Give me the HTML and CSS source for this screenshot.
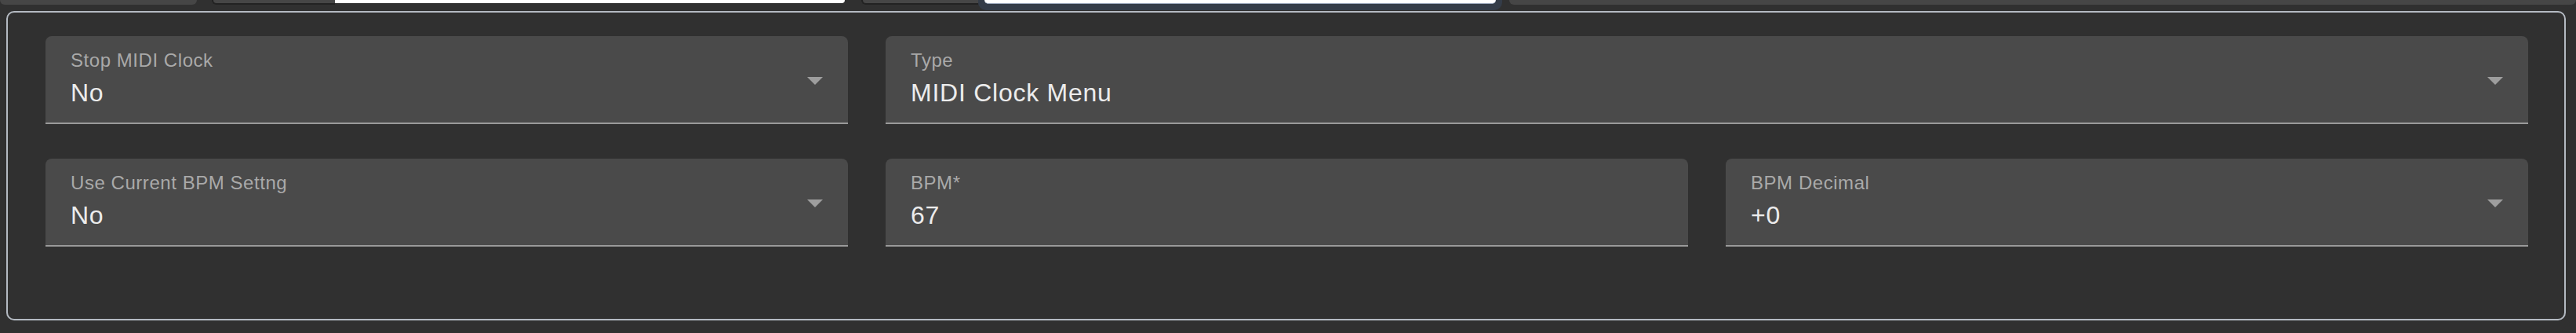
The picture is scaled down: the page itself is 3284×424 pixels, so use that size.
FILE: index.html
```html
<!DOCTYPE html>
<html lang="en">
<head>
<meta charset="utf-8">
<title>MIDI Clock</title>
<link rel="stylesheet" href="styles.css">
</head>
<body>
<div class="topstrip">
  <div class="stub stub-select stub-first"></div>
  <div class="stub-group">
    <div class="stub stub-btn"></div>
    <div class="stub stub-input"></div>
  </div>
  <div class="stub-group stub-group-2">
    <div class="stub stub-btn stub-btn-2"></div>
    <div class="stub-focus"><div class="stub stub-input stub-input-focused"></div></div>
  </div>
  <div class="stub stub-select stub-last"></div>
</div>
<section class="panel">
  <div class="grid">
    <div class="field select">
      <div class="field-text">
        <div class="label">Stop MIDI Clock</div>
        <div class="value">No</div>
      </div>
      <svg class="arrow" width="20" height="10" viewBox="0 0 20 10"><polygon points="0,0 20,0 10,10"/></svg>
    </div>
    <div class="field select span2">
      <div class="field-text">
        <div class="label">Type</div>
        <div class="value">MIDI Clock Menu</div>
      </div>
      <svg class="arrow" width="20" height="10" viewBox="0 0 20 10"><polygon points="0,0 20,0 10,10"/></svg>
    </div>
    <div class="field select">
      <div class="field-text">
        <div class="label">Use Current BPM Settng</div>
        <div class="value">No</div>
      </div>
      <svg class="arrow" width="20" height="10" viewBox="0 0 20 10"><polygon points="0,0 20,0 10,10"/></svg>
    </div>
    <div class="field">
      <div class="field-text">
        <div class="label">BPM*</div>
        <div class="value">67</div>
      </div>
    </div>
    <div class="field select">
      <div class="field-text">
        <div class="label">BPM Decimal</div>
        <div class="value">+0</div>
      </div>
      <svg class="arrow" width="20" height="10" viewBox="0 0 20 10"><polygon points="0,0 20,0 10,10"/></svg>
    </div>
  </div>
</section>
</body>
</html>
```
FILE: styles.css
```css
html, body {
  margin: 0;
  padding: 0;
  background: #303030;
  font-family: "Liberation Sans", Arial, sans-serif;
}

.topstrip {
  height: 14px;
  display: flex;
  align-items: flex-start;
  overflow: hidden;
}

.stub {
  box-sizing: border-box;
}

.stub-select {
  height: 6px;
  background: #464646;
  border-radius: 0 0 8px 8px;
}

.stub-first {
  width: 251px;
}

.stub-last {
  flex: 1;
  margin-left: 9px;
}

.stub-group {
  display: flex;
  align-items: flex-start;
  margin-left: 19px;
}

.stub-group-2 {
  margin-left: 21px;
}

.stub-btn {
  width: 157px;
  height: 6px;
  background: #464646;
  border: 2px solid #222222;
  border-top: none;
  border-right: none;
  border-radius: 0 0 0 8px;
}

.stub-btn-2 {
  width: 149px;
}

.stub-input {
  width: 650px;
  height: 4px;
  background: #ffffff;
  border-radius: 0 0 8px 0;
}

.stub-focus {
  background: #343c48;
  height: 13px;
  padding: 0 8px;
  border-radius: 0 0 10px 10px;
}

.stub-input-focused {
  width: 652px;
  height: 5px;
  border-bottom: 1px solid #9aa7bb;
  border-radius: 0 0 6px 6px;
}

.panel {
  margin: 0 13px 0 8px;
  border: 2px solid #b4bac2;
  border-radius: 10px;
  padding: 30px 46px 92px 48px;
}

.grid {
  display: grid;
  grid-template-columns: repeat(3, 1fr);
  column-gap: 48px;
  row-gap: 44px;
}

.field {
  box-sizing: border-box;
  height: 112px;
  background: #4a4a4a;
  border-radius: 8px 8px 0 0;
  border-bottom: 2px solid #9a9a9a;
  padding: 17px 32px 0 32px;
  display: flex;
  align-items: flex-start;
}

.span2 {
  grid-column: span 2;
}

.field-text {
  flex: 1;
  min-width: 0;
}

.label {
  font-size: 24px;
  line-height: 28px;
  color: #a9a9a9;
  letter-spacing: 0.55px;
  white-space: nowrap;
}

.value {
  margin-top: 9px;
  font-size: 32px;
  line-height: 36px;
  color: #ececec;
  letter-spacing: 0.75px;
  white-space: nowrap;
}

.arrow {
  flex: none;
  margin-top: 35px;
  fill: #9e9e9e;
}
```
